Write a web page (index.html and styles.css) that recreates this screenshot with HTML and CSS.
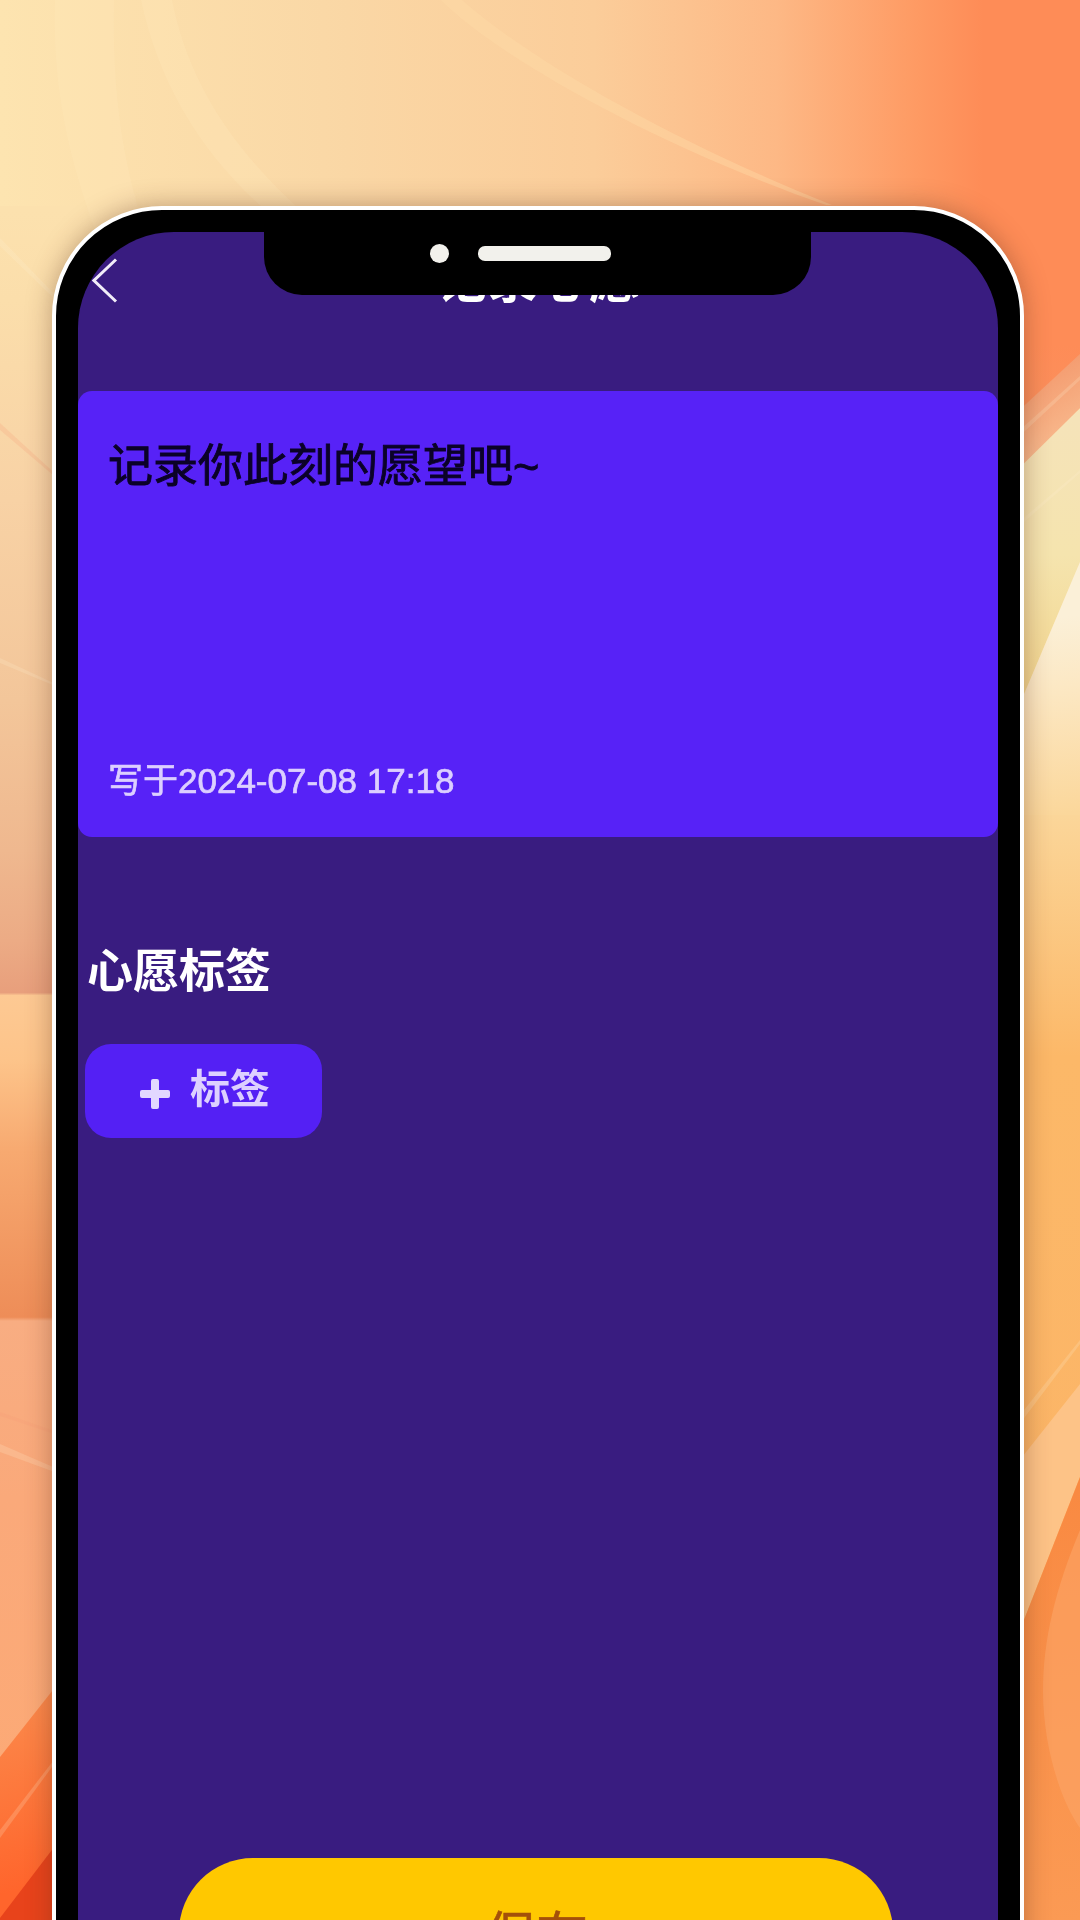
FILE: index.html
```html
<!DOCTYPE html>
<html lang="zh-CN">
<head>
<meta charset="utf-8">
<title>记录心愿</title>
<link rel="stylesheet" href="styles.css">
</head>
<body>
<svg class="backdrop" viewBox="0 0 1080 1920" preserveAspectRatio="none" aria-hidden="true">
  <defs>
    <linearGradient id="top" x1="0" y1="0" x2="1" y2="0">
      <stop offset="0" stop-color="#fde4b0"/>
      <stop offset=".3" stop-color="#fad8a6"/>
      <stop offset=".55" stop-color="#fbcd9a"/>
      <stop offset=".72" stop-color="#fdb885"/>
      <stop offset=".85" stop-color="#fe9a63"/>
      <stop offset=".91" stop-color="#fe8c57"/>
      <stop offset="1" stop-color="#fe8c57"/>
    </linearGradient>
    <linearGradient id="left" x1="0" y1="0" x2="0" y2="1920" gradientUnits="userSpaceOnUse">
      <stop offset=".11" stop-color="#fce1ae"/>
      <stop offset=".156" stop-color="#fbdeab"/>
      <stop offset=".26" stop-color="#f8d2a5"/>
      <stop offset=".365" stop-color="#f3c69a"/>
      <stop offset=".443" stop-color="#efb88f"/>
      <stop offset=".49" stop-color="#ecab85"/>
      <stop offset=".517" stop-color="#e89f7c"/>
      <stop offset=".5185" stop-color="#fdc993"/>
      <stop offset=".552" stop-color="#fdc48a"/>
      <stop offset=".6" stop-color="#f7a970"/>
      <stop offset=".686" stop-color="#ee8d58"/>
      <stop offset=".688" stop-color="#f8ad82"/>
      <stop offset=".78" stop-color="#faa97a"/>
      <stop offset="1" stop-color="#fdaa74"/>
    </linearGradient>
    <linearGradient id="lowerLeft" x1="0" y1="1700" x2="52" y2="1880" gradientUnits="userSpaceOnUse">
      <stop offset="0" stop-color="#fb8a4c"/>
      <stop offset="1" stop-color="#ff652c"/>
    </linearGradient>
    <linearGradient id="right" x1="0" y1="0" x2="0" y2="1920" gradientUnits="userSpaceOnUse">
      <stop offset=".18" stop-color="#fe8c57"/>
      <stop offset=".21" stop-color="#fb8f5c"/>
      <stop offset=".3" stop-color="#fce4b4"/>
      <stop offset=".42" stop-color="#fbd79b"/>
      <stop offset=".55" stop-color="#fcb868"/>
      <stop offset="1" stop-color="#fbb266"/>
    </linearGradient>
    <linearGradient id="band" x1="1024" y1="380" x2="1060" y2="440" gradientUnits="userSpaceOnUse">
      <stop offset="0" stop-color="#f49a6e"/>
      <stop offset="1" stop-color="#f8b88c"/>
    </linearGradient>
    <linearGradient id="yellow" x1="0" y1="420" x2="0" y2="690" gradientUnits="userSpaceOnUse">
      <stop offset="0" stop-color="#f5e3b9"/>
      <stop offset=".5" stop-color="#f5e4ae"/>
      <stop offset="1" stop-color="#f3d68f"/>
    </linearGradient>
    <linearGradient id="glow" x1="1030" y1="620" x2="1050" y2="815" gradientUnits="userSpaceOnUse">
      <stop offset="0" stop-color="#fbf0d8"/>
      <stop offset=".35" stop-color="#fce8c4"/>
      <stop offset="1" stop-color="#fbd79b"/>
    </linearGradient>
    <linearGradient id="lowerRight" x1="1024" y1="1500" x2="1080" y2="1920" gradientUnits="userSpaceOnUse">
      <stop offset="0" stop-color="#f98a42"/>
      <stop offset="1" stop-color="#fb9a54"/>
    </linearGradient>
  </defs>

  <rect width="1080" height="1920" fill="url(#top)"/>
  <rect y="206" width="90" height="1714" fill="url(#left)"/>
  <rect x="1000" y="320" width="80" height="1600" fill="url(#right)"/>

  <!-- cream arcs, top left -->
  <path class="arc" d="M55 0H114C112 90 122 160 145 230H95C70 160 52 90 55 0Z"/>
  <path class="arc" d="M141 0H172C190 90 240 160 323 230H290C210 170 160 90 141 0Z"/>
  <path class="swoosh" d="M441 0C490 50 640 140 826 205L832 205C670 140 530 60 462 0Z"/>

  <!-- streaks, left edge -->
  <path class="streak" d="M0 238L60 300V304L0 246Z"/>
  <path class="streak pink" d="M0 423L60 478V481L0 430Z"/>
  <path class="streak" d="M0 658L60 686V688L0 663Z"/>
  <path class="streak pink" d="M0 1412L60 1433V1436L0 1416Z"/>
  <path class="streak" d="M0 1444L60 1470V1474L0 1452Z"/>

  <!-- lower left wedges -->
  <path d="M0 1757L90 1643V1920H0Z" fill="url(#lowerLeft)"/>
  <path class="streak" d="M0 1830L60 1752V1756L0 1838Z"/>
  <path d="M0 1918L90 1800V1920H0Z" fill="#e8431b"/>

  <!-- right edge bands -->
  <path d="M1000 428L1080 354V408L1000 487Z" fill="url(#band)"/>
  <path class="streak" d="M1000 448L1080 376V380L1000 454Z"/>
  <path d="M1000 487L1080 408V562L1000 751Z" fill="url(#yellow)"/>
  <path class="streak" d="M1000 538L1080 470V473L1000 543Z"/>
  <path d="M1000 751L1080 562V815H1000Z" fill="url(#glow)"/>

  <path d="M1000 1485L1080 1384V1477L1000 1681Z" fill="#fdc387"/>
  <path class="streak" d="M1000 1440L1080 1340V1344L1000 1450Z"/>
  <path d="M1000 1681L1080 1477V1920H1000Z" fill="url(#lowerRight)"/>
  <path class="blob" d="M1080 1530C1055 1590 1043 1640 1043 1691C1043 1745 1060 1800 1080 1828Z"/>
</svg>

<main class="phone">
  <div class="screen">
    <div class="notch">
      <span class="camera"></span>
      <span class="speaker"></span>
    </div>

    <header class="topbar">
      <svg class="back" viewBox="0 0 26 45" aria-hidden="true">
        <path d="M24 1.5L2 22.5L24 43.5"/>
      </svg>
      <h1 class="title">记录心愿</h1>
      <span></span>
    </header>

    <section class="wish-card">
      <p class="wish-prompt">记录你此刻的愿望吧~</p>
      <p class="wish-date">写于2024-07-08 17:18</p>
    </section>

    <section class="tags">
      <h2 class="tags-title">心愿标签</h2>
      <button class="tag-add" type="button">
        <svg class="plus" viewBox="0 0 30 30" aria-hidden="true">
          <path d="M11 2Q11 0 13 0H17Q19 0 19 2V11H28Q30 11 30 13V17Q30 19 28 19H19V28Q19 30 17 30H13Q11 30 11 28V19H2Q0 19 0 17V13Q0 11 2 11H11Z"/>
        </svg>
        <span class="tag-label">标签</span>
      </button>
    </section>

    <button class="save" type="button">保存</button>
  </div>
</main>
</body>
</html>
```

FILE: styles.css
```css
* {
  box-sizing: border-box;
}

html,
body {
  margin: 0;
  width: 1080px;
  height: 1920px;
  overflow: hidden;
}

body {
  position: relative;
  font-family: "Liberation Sans", "Noto Sans CJK SC", sans-serif;
}

.backdrop {
  position: absolute;
  inset: 0;
  width: 1080px;
  height: 1920px;
}

.arc {
  fill: #fee9b8;
  opacity: .3;
}

.swoosh {
  fill: #fedca8;
  opacity: .4;
}

.streak {
  fill: #fff0d0;
  opacity: .2;
}

.streak.pink {
  fill: #f59a78;
  opacity: .22;
}

.blob {
  fill: #fca568;
  opacity: .6;
}

.phone {
  position: relative;
  width: 972px;
  margin: 206px 0 0 52px;
  padding: 22px 22px 40px;
  border: 4px solid #fff;
  border-radius: 110px 110px 0 0;
  background: #000;
  box-shadow: 0 0 26px rgba(90, 45, 25, .38);
}

.screen {
  position: relative;
  height: 1800px;
  overflow: hidden;
  border-radius: 96px 96px 0 0;
  background: #391c80;
  color: #fff;
}

.notch {
  position: absolute;
  top: 0;
  left: 186px;
  z-index: 2;
  display: flex;
  align-items: center;
  gap: 29px;
  width: 547px;
  height: 63px;
  padding: 0 0 21px 166px;
  border-radius: 0 0 38px 38px;
  background: #000;
}

.camera {
  width: 19px;
  height: 19px;
  border-radius: 50%;
  background: #f2f1ec;
}

.speaker {
  width: 133px;
  height: 15px;
  border-radius: 7px;
  background: #f2f1ec;
}

.topbar {
  display: grid;
  grid-template-columns: 1fr auto 1fr;
  align-items: center;
  height: 96px;
  padding: 0 14px;
}

.back {
  display: block;
  width: 26px;
  height: 45px;
  fill: none;
  stroke: #f1edf8;
  stroke-width: 3;
  filter: blur(.5px);
}

.title {
  margin: 2px 0 0;
  font-size: 51px;
  font-weight: 700;
  line-height: 60px;
  filter: blur(.7px);
}

.wish-card {
  display: flex;
  flex-direction: column;
  justify-content: space-between;
  height: 446px;
  margin-top: 63px;
  padding: 46px 32px 34px 30px;
  border-radius: 14px;
  background: #5722f7;
}

.wish-prompt {
  margin: 0;
  color: #0b0228;
  font-size: 45px;
  line-height: 60px;
  -webkit-text-stroke: .9px #0b0228;
  filter: blur(.6px);
}

.wish-date {
  margin: 0;
  color: #dccfff;
  font-size: 35px;
  line-height: 44px;
  -webkit-text-stroke: .7px #dccfff;
  filter: blur(.6px);
}

.tags {
  display: flex;
  flex-direction: column;
  align-items: flex-start;
  padding: 104px 0 0 7px;
}

.tags-title {
  margin: 0 0 0 2px;
  font-size: 46px;
  font-weight: 700;
  line-height: 60px;
  filter: blur(.7px);
}

.tag-add {
  display: flex;
  align-items: center;
  gap: 20px;
  width: 237px;
  height: 94px;
  margin-top: 43px;
  padding: 0 0 0 55px;
  border: 0;
  border-radius: 26px;
  background: #5420f4;
  color: #ddd0ff;
  font-family: inherit;
}

.plus {
  display: block;
  width: 30px;
  height: 30px;
  margin-top: 6px;
  fill: #e2d8ff;
  filter: blur(.6px);
}

.tag-label {
  margin-top: -4px;
  font-size: 40px;
  font-weight: 700;
  line-height: 48px;
  filter: blur(.7px);
}

.save {
  display: block;
  width: 714px;
  height: 148px;
  margin: 720px 0 0 101px;
  padding: 0;
  border: 0;
  border-radius: 74px;
  background: #ffc800;
  color: #a4500a;
  font-family: inherit;
  font-size: 52px;
  -webkit-text-stroke: .6px #a4500a;
  filter: blur(.6px);
}
```
